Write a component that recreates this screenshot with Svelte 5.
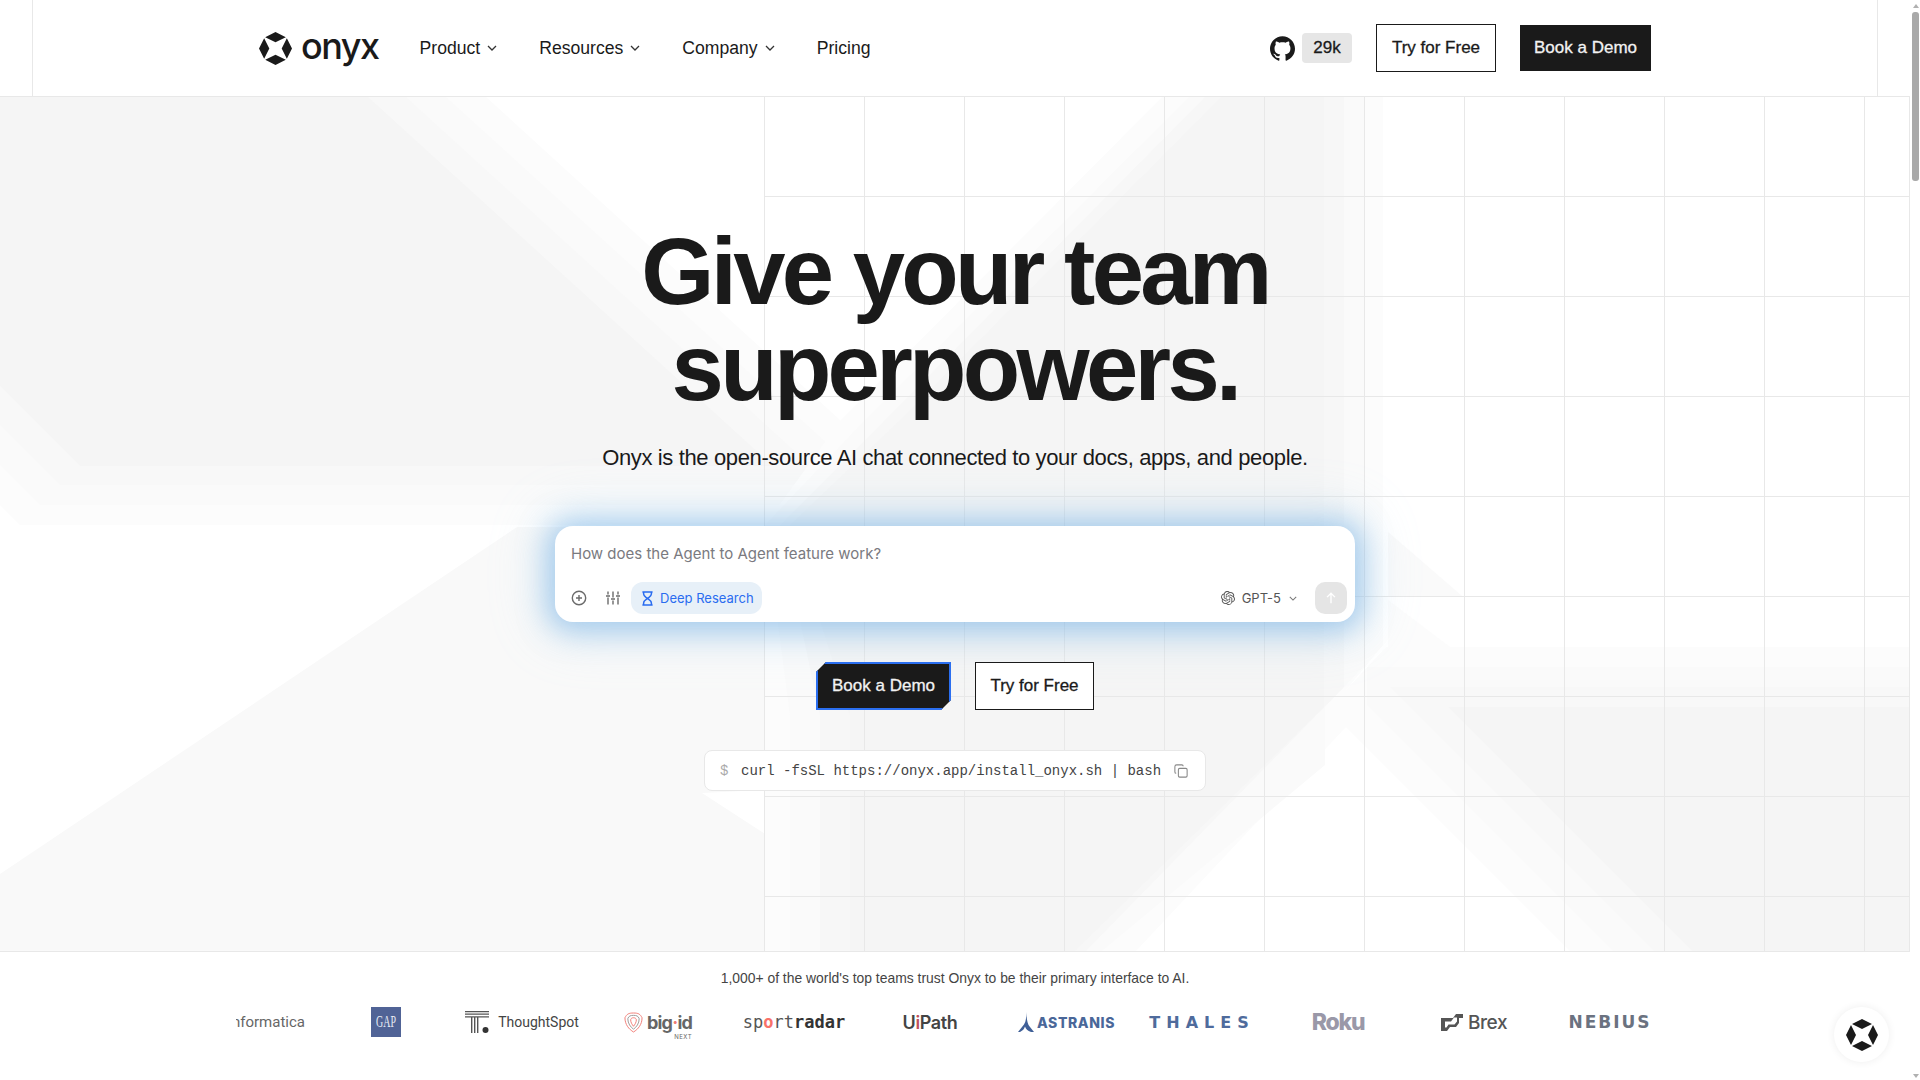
<script>
	const navLinks = [
		{ label: 'Product', menu: true },
		{ label: 'Resources', menu: true },
		{ label: 'Company', menu: true },
		{ label: 'Pricing', menu: false }
	];

	// backdrop shapes, painted light to dark
	const shapes = [
		['#fcfcfc', '0,505 20,525 955,525 485,96 0,96'],
		['#fafafa', '0,465 40,505 895,505 445,96 0,96'],
		['#f8f8f8', '0,425 60,485 832,485 405,96 0,96'],
		['#f5f5f5', '0,386 80,466 773,466 367,96 0,96'],
		['#f9f9f9', '0,874 517,527 765,527 765,790 702,793 765,834 765,951 0,951'],
		['#fcfcfc', '1163,96 1383,96 1383,645 1346,690 1346,727 1136,951 765,951 765,525 841,420'],
		['#fafafa', '1190,96 1365,96 1365,665 1325,707 1325,765 1102,951 790,951 790,716 765,525 860,425'],
		['#f7f7f7', '1206,96 1344,96 1344,687 1086,951 820,951 820,716 780,525 880,425'],
		['#f5f5f5', '1222,96 1324,96 1324,707 1075,951 850,951 850,716 790,525 900,420'],
		['#fafafa', '1388,532 1462,596 1388,596'],
		['#fcfcfc', '1388,600 1450,647 1388,647'],
		['#fcfcfc', '1386,647 1912,647 1912,951 1570,951 1346,727 1346,690'],
		['#fafafa', '1367,667 1912,667 1912,951 1613,951 1367,705'],
		['#f8f8f8', '1390,687 1912,687 1912,951 1654,951'],
		['#f5f5f5', '1448,707 1912,707 1912,951 1692,951']
	];
</script>

{#snippet onyxMark()}
	<svg class="mark" viewBox="0 0 32 32" aria-hidden="true">
		<path d="M16 0l10 5-10 5L6 5zM16 22l10 5-10 5-10-5zM0 16L5 6l5 10-5 10zM22 16l5-10 5 10-5 10z" fill="#1a1a1a" />
	</svg>
{/snippet}

<div class="app">
	<div class="page">
		<header class="nav">
			<div class="nav-frame">
				<div class="nav-inner">
					<a class="brand" href="#top">
						{@render onyxMark()}
						<span>onyx</span>
					</a>
					<nav class="links">
						{#each navLinks as link}
							<a href="#top">
								{link.label}
								{#if link.menu}
									<svg viewBox="0 0 10 6" class="chev" aria-hidden="true"><path d="M1 1l4 4 4-4" /></svg>
								{/if}
							</a>
						{/each}
					</nav>
					<div class="nav-actions">
						<a class="github" href="#top" aria-label="GitHub">
							<svg viewBox="0 0 24 24" aria-hidden="true"><path fill="#1a1a1a" d="M12 .297c-6.63 0-12 5.373-12 12 0 5.303 3.438 9.8 8.205 11.385.6.113.82-.258.82-.577 0-.285-.01-1.04-.015-2.04-3.338.724-4.042-1.61-4.042-1.61C4.422 18.07 3.633 17.7 3.633 17.7c-1.087-.744.084-.729.084-.729 1.205.084 1.838 1.236 1.838 1.236 1.07 1.835 2.809 1.305 3.495.998.108-.776.417-1.305.76-1.605-2.665-.3-5.466-1.332-5.466-5.93 0-1.31.465-2.38 1.235-3.22-.135-.303-.54-1.523.105-3.176 0 0 1.005-.322 3.3 1.23.96-.267 1.98-.399 3-.405 1.02.006 2.04.138 3 .405 2.28-1.552 3.285-1.23 3.285-1.23.645 1.653.24 2.873.12 3.176.765.84 1.23 1.91 1.23 3.22 0 4.61-2.805 5.625-5.475 5.92.42.36.81 1.096.81 2.22 0 1.606-.015 2.896-.015 3.286 0 .315.21.69.825.57C20.565 22.092 24 17.592 24 12.297c0-6.627-5.373-12-12-12" /></svg>
							<span class="stars">29k</span>
						</a>
						<a class="btn outline" href="#top">Try for Free</a>
						<a class="btn solid" href="#top">Book a Demo</a>
					</div>
				</div>
			</div>
		</header>

		<main class="hero">
			<svg class="backdrop" viewBox="0 97 1910 854" aria-hidden="true">
				{#each shapes as [fill, points]}
					<polygon {fill} {points} />
				{/each}
			</svg>
			<div class="grid-lines"></div>

			<div class="hero-content">
				<h1>Give your team<br />superpowers.</h1>
				<p class="sub">Onyx is the open-source AI chat connected to your docs, apps, and people.</p>

				<div class="prompt">
					<div class="placeholder">How does the Agent to Agent feature work?</div>
					<div class="prompt-row">
						<svg class="ico" viewBox="0 0 16 16" aria-hidden="true">
							<circle cx="8" cy="8" r="6.7" />
							<path d="M8 5v6M5 8h6" />
						</svg>
						<svg class="ico sliders" viewBox="0 0 16 16" aria-hidden="true">
							<path d="M3 1.5v3M3 7.5v7M8 1.5v6M8 10.500v4M13 1.5v3M13 7.5v7M1 6h4M6 9h4M11 6h4" />
						</svg>
						<span class="pill">
							<svg viewBox="0 0 14 16" aria-hidden="true"><path d="M1.5 1h11M1.5 15h11M2.800 1v2.200c0 2.400 2.600 3.400 4.200 4.800 1.600-1.400 4.200-2.400 4.200-4.800V1M2.800 15v-2.200c0-2.400 2.600-3.400 4.200-4.800 1.600 1.400 4.200 2.400 4.200 4.800V15" /></svg>
							Deep Research
						</span>
						<span class="model">
							<svg viewBox="0 0 24 24" aria-hidden="true"><path fill="#555" d="M22.2819 9.8211a5.9847 5.9847 0 0 0-.5157-4.9108 6.0462 6.0462 0 0 0-6.5098-2.9A6.0651 6.0651 0 0 0 4.9807 4.1818a5.9847 5.9847 0 0 0-3.9977 2.9 6.0462 6.0462 0 0 0 .7427 7.0966 5.98 5.98 0 0 0 .511 4.9107 6.051 6.051 0 0 0 6.5146 2.9001A5.9847 5.9847 0 0 0 13.2599 24a6.0557 6.0557 0 0 0 5.7718-4.2058 5.9894 5.9894 0 0 0 3.9977-2.9001 6.0557 6.0557 0 0 0-.7475-7.0729zm-9.022 12.6081a4.4755 4.4755 0 0 1-2.8764-1.0408l.1419-.0804 4.7783-2.7582a.7948.7948 0 0 0 .3927-.6813v-6.7369l2.02 1.1686a.071.071 0 0 1 .038.052v5.5826a4.504 4.504 0 0 1-4.4945 4.4944zm-9.6607-4.1254a4.4708 4.4708 0 0 1-.5346-3.0137l.142.0852 4.783 2.7582a.7712.7712 0 0 0 .7806 0l5.8428-3.3685v2.3324a.0804.0804 0 0 1-.0332.0615L9.74 19.9502a4.4992 4.4992 0 0 1-6.1408-1.6464zM2.3408 7.8956a4.485 4.485 0 0 1 2.3655-1.9728V11.6a.7664.7664 0 0 0 .3879.6765l5.8144 3.3543-2.0201 1.1685a.0757.0757 0 0 1-.071 0l-4.8303-2.7865A4.504 4.504 0 0 1 2.3408 7.872zm16.5963 3.8558L13.1038 8.364 15.1192 7.2a.0757.0757 0 0 1 .071 0l4.8303 2.7913a4.4944 4.4944 0 0 1-.6765 8.1042v-5.6772a.79.79 0 0 0-.407-.667zm2.0107-3.0231l-.142-.0852-4.7735-2.7818a.7759.7759 0 0 0-.7854 0L9.409 9.2297V6.8974a.0662.0662 0 0 1 .0284-.0615l4.8303-2.7866a4.4992 4.4992 0 0 1 6.6802 4.66zM8.3065 12.863l-2.02-1.1638a.0804.0804 0 0 1-.038-.0567V6.0742a4.4992 4.4992 0 0 1 7.3757-3.4537l-.142.0805L8.704 5.459a.7948.7948 0 0 0-.3927.6813zm1.0976-2.3654l2.602-1.4998 2.6069 1.4998v2.9994l-2.5974 1.4997-2.6067-1.4997Z" /></svg>
							GPT-5
							<svg class="chev small" viewBox="0 0 10 6" aria-hidden="true"><path d="M1 1l4 4 4-4" /></svg>
						</span>
						<button class="send" aria-label="Send">
							<svg viewBox="0 0 16 16" aria-hidden="true"><path d="M8 14V2.500M3.500 7L8 2.500 12.500 7" /></svg>
						</button>
					</div>
				</div>

				<div class="cta">
					<a class="cta-demo" href="#top">Book a Demo</a>
					<a class="cta-try" href="#top">Try for Free</a>
				</div>

				<div class="curl">
					<span class="dollar">$</span>
					<code>curl -fsSL https://onyx.app/install_onyx.sh | bash</code>
					<svg viewBox="0 0 16 16" aria-hidden="true"><rect x="5" y="5" width="10" height="10" rx="1.500" /><path d="M2.500 10.500c-.8 0-1.500-.7-1.500-1.500V3c0-1.100.9-2 2-2h6c.8 0 1.500.7 1.500 1.500" /></svg>
				</div>
			</div>
		</main>

		<section class="trust">
			<p>1,000+ of the world's top teams trust Onyx to be their primary interface to AI.</p>
			<div class="marquee">
				<div class="track">
					<div class="logo first"><span class="l-informatica">Informatica</span></div>
					<div class="logo"><span class="l-gap"><span>GAP</span></span></div>
					<div class="logo l-ts">
						<svg viewBox="0 0 24 22" aria-hidden="true"><path d="M0 0h24v1.200H0zM0 2.600h24v1.200H0zM0 5.200h24v1.200H0zM6 6.400h1.400V22H6zM9 6.400h1.400V22H9zM12 6.400h1.400V22H12z" fill="#555" /><circle cx="20.500" cy="19" r="3" fill="#333" /></svg>
						<span>ThoughtSpot</span>
					</div>
					<div class="logo l-bigid">
						<svg viewBox="0 0 20 22" aria-hidden="true"><g fill="none" stroke="#f07a74" stroke-width="1"><path d="M1 6c2-4 4-5 9-5s7 1 9 5c0 7-4 12-9 15C5 18 1 13 1 6z" /><path d="M4 7c1-3 3-3.500 6-3.500S15 4 16 7c0 5-3 9-6 11-3-2-6-6-6-11z" stroke="#999" /><path d="M7 8c.5-1.500 1.500-2 3-2s2.500.5 3 2c0 3-1.500 5-3 7-1.500-2-3-4-3-7z" /></g></svg>
						<span class="bigid-word">big<i>·</i>id<small>NEXT</small></span>
					</div>
					<div class="logo l-sport"><span>sp<b class="sq">o</b>rt<strong>radar</strong></span></div>
					<div class="logo l-uipath"><span>U<em>i</em>Path</span></div>
					<div class="logo l-astranis">
						<svg viewBox="0 0 18 20" aria-hidden="true"><path d="M9 0c.4 6 .2 11-4 15L1 20h2c3-1.500 4-3 5-5.500.8 2.500 2.500 4.500 6 5.500h3l-4-5C10 12 9.800 6 9 0z" fill="#3f5f97" /></svg>
						<span>ASTRANIS</span>
					</div>
					<div class="logo l-thales"><span>THALES</span></div>
					<div class="logo l-roku"><span>Roku</span></div>
					<div class="logo l-brex">
						<svg viewBox="0 0 22 17" aria-hidden="true"><path d="M0 4v13h6l3-4h6l3-4V4h4V0h-7l-3 4zM4 7.500h6l3-4h3v4l-2.500 3H7.500l-2 3H4z" fill="#555" fill-rule="evenodd" /></svg>
						<span>Brex</span>
					</div>
					<div class="logo l-nebius"><span>NEBIUS</span></div>
				</div>
			</div>
		</section>

		<button class="fab" aria-label="Open chat">{@render onyxMark()}</button>
	</div>

	<div class="scrollbar" aria-hidden="true">
		<i class="arrow up"></i>
		<i class="thumb"></i>
		<i class="arrow down"></i>
	</div>
</div>

<style>
	:global(body) {
		overflow: hidden;
		background: #fff;
	}

	.app {
		display: flex;
		width: 1920px;
		height: 1080px;
		overflow: hidden;
		font-family: 'Liberation Sans', Arial, sans-serif;
		color: #1a1a1a;
	}

	.page {
		position: relative;
		display: flex;
		flex-direction: column;
		flex: 1;
		min-width: 0;
	}

	a {
		color: inherit;
		text-decoration: none;
	}

	.nav {
		height: 96px;
		flex-shrink: 0;
		padding: 0 32px;
		border-bottom: 1px solid #e8e8e8;
		background: #fff;
	}

	.nav-frame {
		height: 100%;
		border-left: 1px solid #e8e8e8;
		border-right: 1px solid #e8e8e8;
		padding: 0 226px;
	}

	.nav-inner {
		display: flex;
		align-items: center;
		height: 100%;
	}

	.brand {
		display: flex;
		align-items: center;
		gap: 9px;
		font-family: Inter, sans-serif;
		font-size: 36px;
		font-weight: 500;
		letter-spacing: -1.5px;
		line-height: 1;
	}

	.brand span {
		margin-top: -5px;
	}

	.mark {
		display: block;
		width: 33px;
		height: 33px;
	}

	.links {
		display: flex;
		align-items: center;
		gap: 42px;
		margin-left: 41px;
		font-size: 17.6px;
	}

	.links a {
		display: flex;
		align-items: center;
		gap: 7px;
	}

	.chev {
		width: 10px;
		height: 6px;
		fill: none;
		stroke: #333;
		stroke-width: 1.3;
	}

	.nav-actions {
		display: flex;
		align-items: center;
		margin-left: auto;
	}

	.github {
		display: flex;
		align-items: center;
		gap: 7px;
		margin-right: 24px;
	}

	.github svg {
		width: 25px;
		height: 25px;
	}

	.stars {
		display: flex;
		align-items: center;
		justify-content: center;
		width: 50px;
		height: 30px;
		background: #e6e6e6;
		border-radius: 4px;
		font-size: 17px;
		-webkit-text-stroke: 0.3px currentColor;
	}

	.btn {
		display: flex;
		align-items: center;
		justify-content: center;
		box-sizing: border-box;
		font-size: 17px;
		-webkit-text-stroke: 0.3px currentColor;
	}

	.btn.outline {
		width: 120px;
		height: 48px;
		border: 1.5px solid #1a1a1a;
		background: #fff;
	}

	.btn.solid {
		width: 131px;
		height: 46px;
		margin-left: 24px;
		background: #1a1a1a;
		color: #f2f2f2;
	}

	.hero {
		position: relative;
		height: 854px;
		flex-shrink: 0;
		overflow: hidden;
		border-bottom: 1px solid #e8e8e8;
	}

	.backdrop {
		position: absolute;
		inset: 0;
		width: 100%;
		height: 100%;
	}

	.grid-lines {
		position: absolute;
		top: 0;
		bottom: 0;
		left: 764px;
		right: 0;
		background-image: linear-gradient(#e8e8e8 1px, transparent 1px),
			linear-gradient(90deg, #e8e8e8 1px, transparent 1px);
		background-size: 100px 100px;
		background-position: 0 99px;
		border-right: 1px solid #e8e8e8;
	}

	.hero-content {
		position: relative;
		display: flex;
		flex-direction: column;
		align-items: center;
		padding-top: 127px;
	}

	h1 {
		margin: 0;
		font-size: 94px;
		line-height: 96px;
		font-weight: 700;
		letter-spacing: -3.7px;
		text-align: center;
	}

	.sub {
		margin: 26px 0 0;
		font-size: 22px;
		line-height: 32px;
		letter-spacing: -0.37px;
	}

	.prompt {
		box-sizing: border-box;
		width: 800px;
		height: 96px;
		margin-top: 52px;
		padding: 17px 8px 8px 16px;
		background: #fff;
		border-radius: 18px;
		box-shadow: 0 2px 28px 8px rgba(100, 165, 225, 0.5), 0 0 52px 16px rgba(160, 212, 248, 0.22);
		display: flex;
		flex-direction: column;
		justify-content: space-between;
		font-family: Inter, sans-serif;
	}

	.placeholder {
		font-size: 15px;
		line-height: 22px;
		color: #7a7a80;
	}

	.prompt-row {
		display: flex;
		align-items: center;
		height: 32px;
	}

	.ico {
		width: 16px;
		height: 16px;
		fill: none;
		stroke: #6b6b6b;
		stroke-width: 1.4;
		flex-shrink: 0;
	}

	.sliders {
		margin-left: 18px;
	}

	.pill {
		display: flex;
		align-items: center;
		gap: 6px;
		height: 32px;
		margin-left: 10px;
		padding: 0 8px 0 10px;
		background: #e7f0f8;
		border-radius: 12px;
		font-size: 13px;
		color: #2a6cf0;
	}

	.pill svg {
		width: 13px;
		height: 15px;
		fill: none;
		stroke: #2a6cf0;
		stroke-width: 1.6;
	}

	.model {
		display: flex;
		align-items: center;
		gap: 7px;
		margin-left: auto;
		font-size: 13px;
		color: #555;
	}

	.model > svg:first-child {
		width: 14px;
		height: 14px;
	}

	.chev.small {
		width: 8px;
		height: 5px;
		margin-left: 1px;
		stroke: #777;
	}

	.send {
		display: flex;
		align-items: center;
		justify-content: center;
		width: 32px;
		height: 32px;
		margin-left: 18px;
		padding: 0;
		border: none;
		border-radius: 10px;
		background: #e5e5e5;
	}

	.send svg {
		width: 14px;
		height: 14px;
		fill: none;
		stroke: #fff;
		stroke-width: 1.6;
	}

	.cta {
		display: flex;
		gap: 24px;
		margin-top: 40px;
	}

	.cta a {
		display: flex;
		align-items: center;
		justify-content: center;
		box-sizing: border-box;
		height: 48px;
		font-size: 17px;
		-webkit-text-stroke: 0.3px currentColor;
	}

	.cta-demo {
		width: 135px;
		background: #1a1a1a;
		color: #f2f2f2;
		border: 2px solid #2b6ff0;
		clip-path: polygon(10px 0, 100% 0, 100% calc(100% - 10px), calc(100% - 10px) 100%, 0 100%, 0 10px);
	}

	.cta-try {
		width: 119px;
		background: #fff;
		border: 1.5px solid #1a1a1a;
	}

	.curl {
		display: flex;
		align-items: center;
		box-sizing: border-box;
		width: 502px;
		height: 41px;
		margin-top: 40px;
		padding: 0 15px;
		background: #fff;
		border: 1px solid #e8e8e8;
		border-radius: 8px;
		white-space: nowrap;
	}

	.dollar {
		width: 21px;
		font-family: 'Liberation Mono', monospace;
		font-size: 14px;
		color: #aaa;
	}

	.curl code {
		font-family: 'Liberation Mono', monospace;
		font-size: 14px;
		color: #444;
	}

	.curl svg {
		flex-shrink: 0;
		width: 14px;
		height: 14px;
		margin-left: 13px;
		fill: none;
		stroke: #888;
		stroke-width: 1.2;
	}

	.trust {
		flex: 1;
		background: #fff;
		padding-top: 16px;
	}

	.trust p {
		margin: 0;
		font-size: 13.9px;
		line-height: 20px;
		color: #444;
		text-align: center;
	}

	.marquee {
		width: 1417px;
		margin: 19px 0 0 236px;
		padding-bottom: 12px;
		overflow: hidden;
	}

	.track {
		display: flex;
		margin-left: -34px;
	}

	.logo {
		display: flex;
		align-items: center;
		justify-content: center;
		flex: 0 0 136px;
		height: 30px;
		white-space: nowrap;
	}

	.logo.first {
		flex-basis: 116px;
		justify-content: flex-end;
		padding-right: 13px;
		box-sizing: border-box;
	}

	.l-informatica {
		font-family: Roboto, sans-serif;
		font-size: 15px;
		color: #666;
	}

	.l-gap {
		display: flex;
		align-items: center;
		justify-content: center;
		width: 30px;
		height: 30px;
		background: #506396;
		color: #e9edf5;
		font-family: 'Liberation Serif', serif;
		font-size: 16px;
	}

	.l-gap span {
		display: inline-block;
		transform: scaleX(0.62);
	}

	.l-ts {
		gap: 9px;
		font-family: Roboto, sans-serif;
		font-size: 14px;
		color: #444;
	}

	.l-ts svg {
		width: 24px;
		height: 22px;
	}

	.l-bigid {
		gap: 4px;
		font-family: Inter, sans-serif;
	}

	.l-bigid svg {
		width: 19px;
		height: 21px;
	}

	.bigid-word {
		position: relative;
		font-size: 18px;
		font-weight: 700;
		letter-spacing: -0.8px;
		color: #666;
	}

	.bigid-word i {
		font-style: normal;
		color: #f07a74;
	}

	.bigid-word small {
		position: absolute;
		right: 0;
		bottom: -7px;
		font-size: 6px;
		font-weight: 400;
		letter-spacing: 0.5px;
	}

	.l-sport {
		font-family: 'DejaVu Sans Mono', monospace;
		font-size: 17px;
		color: #555;
	}

	.sq {
		color: #f9726a;
		font-weight: 700;
	}

	.l-sport strong {
		color: #333;
	}

	.l-uipath {
		font-family: Inter, sans-serif;
		font-size: 18px;
		font-weight: 600;
		letter-spacing: -0.4px;
		color: #444;
	}

	.l-uipath em {
		font-style: normal;
		color: #c0515a;
	}

	.l-astranis {
		gap: 2px;
		font-family: Inter, sans-serif;
		font-size: 14px;
		font-weight: 800;
		letter-spacing: 0.6px;
		color: #4a6799;
	}

	.l-astranis svg {
		width: 18px;
		height: 20px;
	}

	.l-thales {
		font-family: 'DejaVu Sans', sans-serif;
		font-size: 16px;
		font-weight: 700;
		letter-spacing: 6px;
		color: #4f6b9c;
	}

	.l-roku {
		font-family: Inter, sans-serif;
		font-size: 23px;
		font-weight: 800;
		letter-spacing: -1.2px;
		color: #9a98a8;
	}

	.l-brex {
		gap: 5px;
		font-family: Inter, sans-serif;
		font-size: 19px;
		font-weight: 500;
		letter-spacing: -0.4px;
		color: #555;
	}

	.l-brex svg {
		width: 22px;
		height: 17px;
	}

	.l-nebius {
		font-family: 'DejaVu Sans', sans-serif;
		font-size: 17px;
		font-weight: 700;
		letter-spacing: 2px;
		color: #6b7280;
	}

	.fab {
		position: absolute;
		right: 21px;
		top: 1007px;
		display: flex;
		align-items: center;
		justify-content: center;
		width: 55px;
		height: 55px;
		padding: 0;
		border: none;
		border-radius: 50%;
		background: #fff;
		box-shadow: 0 0 8px rgba(0, 0, 0, 0.07);
	}

	.fab .mark {
		width: 32px;
		height: 32px;
	}

	.scrollbar {
		position: relative;
		flex: 0 0 10px;
		height: 100%;
		background: #fff;
	}

	.thumb {
		position: absolute;
		top: 12px;
		left: 2px;
		width: 7px;
		height: 169px;
		border-radius: 3px;
		background: #a9a9a9;
	}

	.arrow {
		position: absolute;
		left: 3px;
		width: 0;
		height: 0;
		border-left: 3px solid transparent;
		border-right: 3px solid transparent;
	}

	.arrow.up {
		top: 4px;
		border-bottom: 4px solid #b0b0b0;
	}

	.arrow.down {
		bottom: 2px;
		border-top: 4px solid #b0b0b0;
	}
</style>
